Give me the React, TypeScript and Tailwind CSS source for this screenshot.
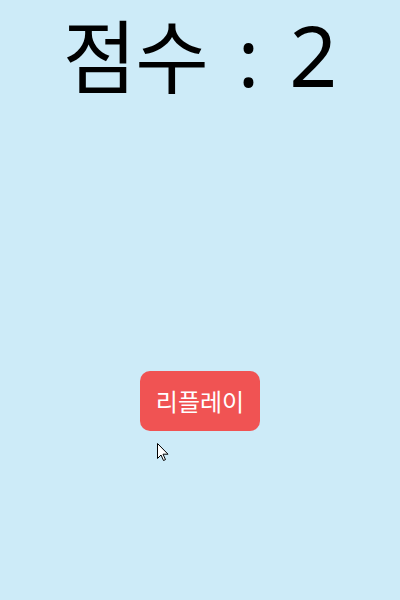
export default function App() {
  return (
    <div className="relative w-[400px] h-[600px] bg-[#cdebf8] flex flex-col items-center" style={{ fontFamily: '"Noto Sans CJK KR", sans-serif' }}>
      <h1 className="flex items-baseline mt-[2px] leading-[1.25] text-black font-normal">
        <span className="text-[80px] tracking-[-1px]">점수</span>
        <span className="text-[80px] ml-[30px]" style={{ fontFamily: '"Noto Sans", sans-serif' }}>:</span>
        <span className="text-[84px] ml-[30px]" style={{ fontFamily: '"Noto Sans", sans-serif' }}>2</span>
      </h1>
      <button className="mt-[264px] w-[120px] h-[60px] rounded-[10px] bg-[#f05353] text-white text-[24px] leading-[1.4]">리플레이</button>
      <svg className="absolute left-[157px] top-[443px]" width="13" height="19" viewBox="0 0 13 19">
        <path d="M0.5 0.5 L0.5 15.5 L4 12 L6.5 17.5 L8.5 16.6 L6 11.2 L11 11.2 Z" fill="white" stroke="black" strokeWidth="1" />
      </svg>
    </div>
  );
}
